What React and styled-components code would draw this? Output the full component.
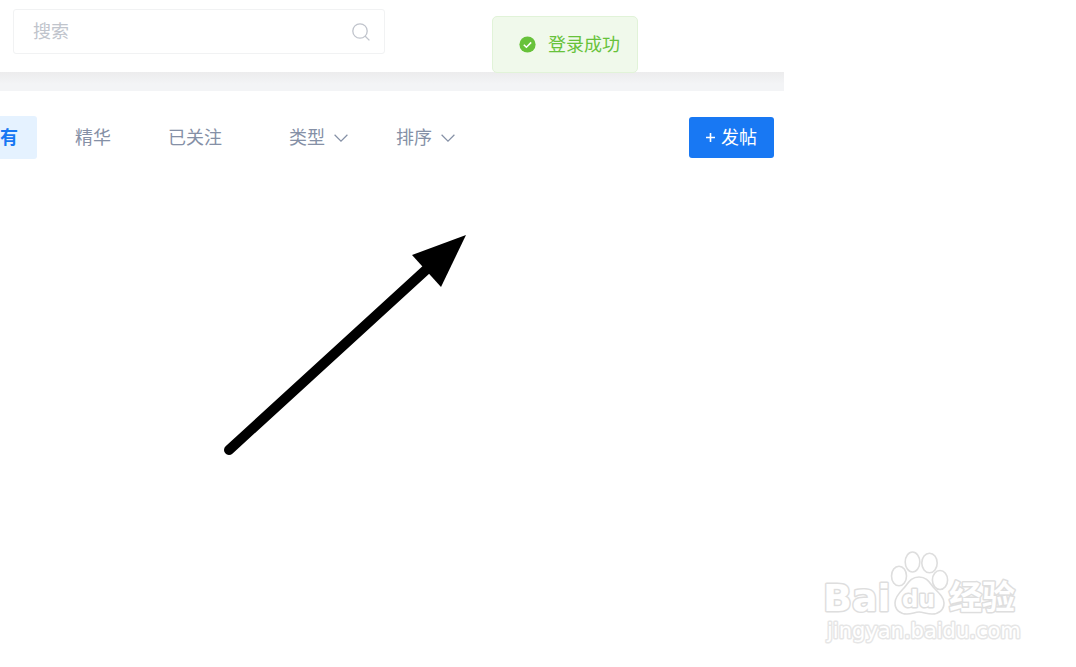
import styled, { createGlobalStyle, ThemeProvider } from 'styled-components';

const theme = {
    primary: '#1878f3',
    primaryLight: '#e5f2ff',
    texts: '#8590a6',
    muted: '#c0c4cc',
    border: '#f1f2f3',
    success: '#67c23a',
    successLight: '#f0f9eb',
    successBorder: '#e1f3d8',
    strip: '#f3f4f6',
};

const GlobalStyle = createGlobalStyle`
* {
    box-sizing: border-box;
}
body {
    margin: 0;
    background-color: #fff;
    font-family: "Noto Sans CJK SC", sans-serif;
    font-size: 18px;
    font-weight: 400;
}
button, input, select {
    font: inherit;
}
`;

const Page = styled.div`
position: relative;
min-height: 100vh;
padding-right: 292px;
overflow: hidden;
`,
    HeaderBar = styled.header`
display: flex;
align-items: center;
height: 72px;
padding: 0 13px 9px;
`,
    SearchBox = styled.label`
display: flex;
align-items: center;
width: 372px;
height: 45px;
padding: 0 14px 0 19px;
border: 1px solid ${props => props.theme.border};
border-radius: 3px;
color: ${props => props.theme.muted};
`,
    SearchInput = styled.input`
flex: 1;
min-width: 0;
height: 40px;
padding: 0 0 4px;
border: 0;
outline: 0;
background: none;
color: ${props => props.theme.texts};
&::placeholder {
    color: ${props => props.theme.muted};
    opacity: 1;
}
`,
    Strip = styled.div`
height: 19px;
background: linear-gradient(#ececed, ${props => props.theme.strip} 12px);
`,
    Toolbar = styled.nav`
display: flex;
align-items: center;
justify-content: space-between;
padding: 25px 10px 0 0;
`,
    Filters = styled.div`
display: flex;
align-items: center;
gap: 48px;
`,
    Tabs = styled.div`
display: flex;
gap: 19px;
`,
    Tab = styled.button`
height: 43px;
padding: 0 19px 2px;
border: 0;
border-radius: 3px;
cursor: pointer;
white-space: nowrap;
line-height: 41px;
font-weight: ${props => props.$active ? 700 : 400};
color: ${props => props.$active ? props.theme.primary : props.theme.texts};
background-color: ${props => props.$active ? props.theme.primaryLight : 'transparent'};
&:first-child {
    padding-left: 0;
    border-radius: 0 3px 3px 0;
}
`,
    Dropdown = styled.label`
display: grid;
align-items: center;
color: ${props => props.theme.texts};
svg {
    grid-area: 1 / 1;
    justify-self: end;
    pointer-events: none;
}
`,
    Select = styled.select`
grid-area: 1 / 1;
appearance: none;
width: 59px;
height: 43px;
padding: 0 0 4px;
border: 0;
background: none;
color: inherit;
cursor: pointer;
`,
    PostButton = styled.button`
display: flex;
align-items: center;
justify-content: center;
gap: 6px;
width: 85px;
height: 41px;
padding: 0;
border: 0;
border-radius: 3px;
cursor: pointer;
color: #fff;
background-color: ${props => props.theme.primary};
`,
    ButtonText = styled.span`
padding-bottom: 4px;
`,
    Toast = styled.div`
position: absolute;
top: 16px;
left: 492px;
display: flex;
align-items: center;
gap: 12px;
height: 57px;
padding: 0 17px 0 26px;
border: 1px solid ${props => props.theme.successBorder};
border-radius: 5px;
color: ${props => props.theme.success};
background-color: ${props => props.theme.successLight};
`,
    ToastText = styled.p`
margin: 0;
padding-bottom: 4px;
`,
    Arrow = styled.svg`
position: absolute;
top: 225px;
left: 210px;
pointer-events: none;
`,
    Watermark = styled.svg`
position: absolute;
right: 46px;
bottom: 12px;
font-family: "DejaVu Sans", "Noto Sans CJK SC", sans-serif;
font-weight: 700;
text {
    paint-order: stroke;
    stroke-linejoin: round;
}
`;

function SearchIcon() {
    return (
        <svg width="18" height="18" viewBox="0 0 18 18" fill="none" stroke="currentColor" strokeWidth="1.3">
            <circle cx="8" cy="8" r="7.2" />
            <path d="M13 13l4.4 4.4" />
        </svg>
    )
}

function SuccessIcon() {
    return (
        <svg width="17" height="17" viewBox="0 0 17 17">
            <circle cx="8.5" cy="8.5" r="8.1" fill="currentColor" />
            <path d="M4.8 8.7l2.6 2.5 4.8-4.8" fill="none" stroke="#fff" strokeWidth="1.5" />
        </svg>
    )
}

function FilterSelect({ label, options }) {
    return (
        <Dropdown>
            <Select aria-label={label}>
                {options.map(option => <option key={option}>{option}</option>)}
            </Select>
            <svg width="14" height="8" viewBox="0 0 14 8" fill="none" stroke="currentColor" strokeWidth="1.2">
                <path d="M.6 .8L7 7.1 13.4 .8" />
            </svg>
        </Dropdown>
    )
}

function BaiduMark() {
    return (
        <Watermark width="206" height="115" viewBox="0 0 206 115" fill="#fff" stroke="#dedede" strokeWidth="3">
            <text x="-1" y="71" fontSize="38">Bai</text>
            <g strokeWidth="1.6">
                <ellipse cx="75" cy="36" rx="7.5" ry="9.8" />
                <ellipse cx="88.5" cy="22" rx="7.3" ry="10" />
                <ellipse cx="105.5" cy="23" rx="7.7" ry="9.8" />
                <ellipse cx="116" cy="40" rx="7.6" ry="9.5" />
                <path d="M95 37c-9 0-11 7-16 12s-8 9-8 14c0 7 5 11 12 11 5 0 8-2 12-2s8 2 13 2c7 0 12-4 12-11 0-5-4-9-9-14s-7-12-16-12z" />
            </g>
            <text x="78" y="67" fontSize="23">du</text>
            <text x="125" y="69" fontSize="33">经验</text>
            <text x="3" y="98" fontSize="21" fontWeight="400" stroke="#e6e6e6">jingyan.baidu.com</text>
        </Watermark>
    )
}

function App() {
    return (
        <ThemeProvider theme={theme}>
            <GlobalStyle />
            <Page>
                <HeaderBar>
                    <SearchBox>
                        <SearchInput type="text" placeholder="搜索" aria-label="搜索" />
                        <SearchIcon />
                    </SearchBox>
                </HeaderBar>
                <Strip />
                <Toolbar>
                    <Filters>
                        <Tabs>
                            <Tab $active>有</Tab>
                            <Tab>精华</Tab>
                            <Tab>已关注</Tab>
                        </Tabs>
                        <FilterSelect label="类型" options={['类型']} />
                        <FilterSelect label="排序" options={['排序']} />
                    </Filters>
                    <PostButton>
                        <svg width="9" height="9" viewBox="0 0 9 9" stroke="currentColor" strokeWidth="1.6">
                            <path d="M4.5 0v9M0 4.5h9" />
                        </svg>
                        <ButtonText>发帖</ButtonText>
                    </PostButton>
                </Toolbar>
                <Toast role="status">
                    <SuccessIcon />
                    <ToastText>登录成功</ToastText>
                </Toast>
                <Arrow width="270" height="240" viewBox="0 0 270 240">
                    <path d="M19 225L218 43" stroke="#000" strokeWidth="10" strokeLinecap="round" />
                    <path d="M256 10L202 30L231 62z" />
                </Arrow>
                <BaiduMark />
            </Page>
        </ThemeProvider>
    )
}

export default App;
